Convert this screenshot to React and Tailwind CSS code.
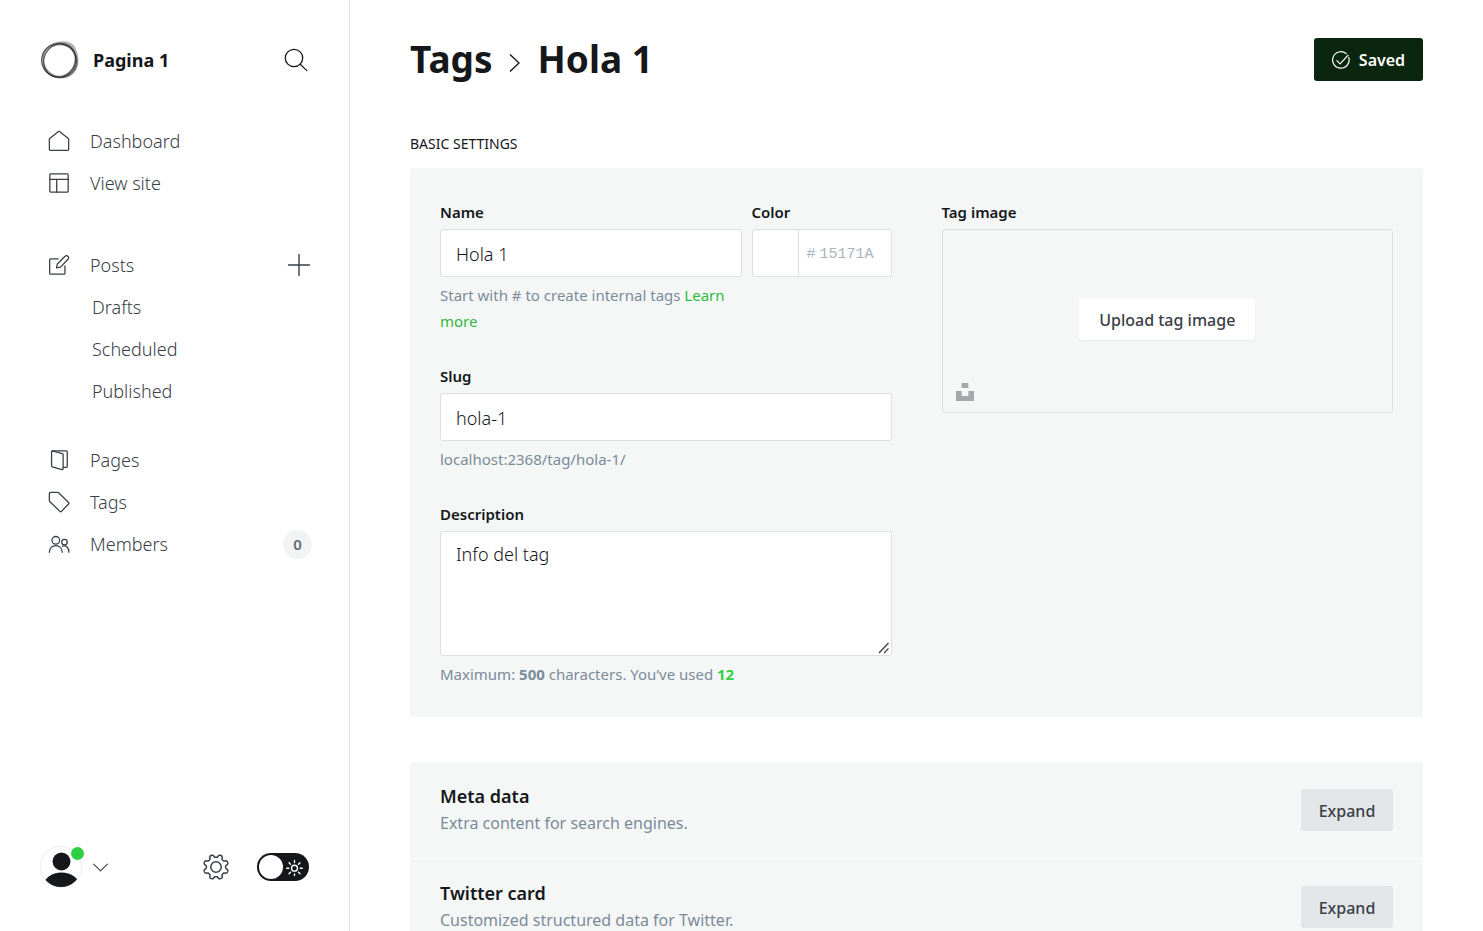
import React from 'react';

function Icon({ children, className = 'size-[22px]', width = 1.4 }) {
  return (
    <svg
      viewBox="0 0 24 24"
      className={className + ' shrink-0'}
      fill="none"
      stroke="currentColor"
      strokeWidth={width}
      strokeLinecap="round"
      strokeLinejoin="round"
      aria-hidden="true"
    >
      {children}
    </svg>
  );
}

const homeIcon = (
  <Icon>
    <path d="M1.500 9.500v11.900c0 .5.300.8.800.8h19.400c.5 0 .8-.3.8-.8V9.500L12.600 1.700a1 1 0 0 0-1.200 0z" />
  </Icon>
);
const siteIcon = (
  <Icon>
    <rect x="2" y="2" width="20" height="20" rx="1" />
    <path d="M2 8h20M9.500 8v14" />
  </Icon>
);
const postsIcon = (
  <Icon>
    <path d="M11 5.300H2.800c-.6 0-1 .4-1 1v14.700c0 .6.4 1 1 1h14.700c.6 0 1-.4 1-1V13" />
    <path d="m13.600 14.300-4.300.9.900-4.300 8.400-8.400a2.200 2.200 0 0 1 3.200 0 2.200 2.200 0 0 1 0 3.200z" />
  </Icon>
);
const pagesIcon = (
  <Icon>
    <path d="M4.500 2h15.500c.5 0 1 .4 1 1v16c0 .5-.4 1-1 1h-3.500" />
    <path d="m4.700 2.100 11 3c.5.100.8.500.8 1v15.500c0 .6-.5 1-1.200.8l-10.600-3a1 1 0 0 1-.8-1V3c0-.6.300-1 .8-.9z" />
  </Icon>
);
const tagIcon = (
  <Icon>
    <path d="M1.500 2.500c0-.6.400-1 1-1h8c.5 0 1 .200 1.400.600l10.500 10.400c.5.500.5 1.200 0 1.700l-7.700 8c-.5.500-1.200.5-1.700 0L2.100 11.700a2 2 0 0 1-.6-1.400z" />
  </Icon>
);
const membersIcon = (
  <Icon>
    <circle cx="8.500" cy="8" r="4.200" />
    <circle cx="18" cy="10" r="3" />
    <path d="M1.500 21c0-4.500 3-7.300 7-7.300s7 2.800 7 7.300M15.800 14.500c3.500-1.700 7 .9 7 6.500" />
  </Icon>
);

function NavItem({ icon, children }) {
  return (
    <a href="#" className="flex h-[42px] grow items-center gap-[20px] pl-2">
      {icon}
      <span>{children}</span>
    </a>
  );
}

function SubItem({ children }) {
  return (
    <a href="#" className="flex h-[42px] items-center pl-[52px]">
      {children}
    </a>
  );
}

function Logo() {
  return (
    <svg viewBox="0 0 40 40" className="size-10 shrink-0" fill="none" aria-hidden="true">
      <path
        d="M19.500 1.500C27 .500 34.500 3 36 9.500C39.500 16 39.500 24 36 30C31 38 23 39.500 16 38C6 35.500 .500 28 1.500 18C2.500 8.500 11 3 19.500 1.500ZM20 5.500C11.500 5.500 4.500 11.500 4 20C3.500 29 11 35.500 20 35.500C26 35.500 33 29.500 34 22C36 12 29 5.500 20 5.500Z"
        fill="#222"
        fillOpacity=".35"
        fillRule="evenodd"
      />
      <ellipse cx="19.500" cy="20" rx="17.200" ry="15.500" stroke="#111" strokeOpacity=".65" strokeWidth="1.100" transform="rotate(-58 20 20)" />
      <ellipse cx="19.200" cy="20.800" rx="17.500" ry="16.700" stroke="#111" strokeOpacity=".6" strokeWidth="1.200" transform="rotate(15 20 20)" />
      <ellipse cx="20.300" cy="20" rx="18" ry="16.200" stroke="#333" strokeOpacity=".4" strokeWidth="1" transform="rotate(48 20 20)" />
    </svg>
  );
}

const gearPath = (() => {
  const points = [];
  for (let i = 0; i < 240; i++) {
    const a = (i / 240) * Math.PI * 2;
    const wave = Math.tanh(2.200 * Math.cos(8 * (a - Math.PI / 8))) / Math.tanh(2.200);
    const r = 10.200 + 1.300 * wave;
    points.push((12 + r * Math.cos(a)).toFixed(2) + ' ' + (12 + r * Math.sin(a)).toFixed(2));
  }
  return 'M' + points.join('L') + 'Z';
})();

function Sidebar() {
  return (
    <aside className="flex w-[350px] shrink-0 flex-col border-r border-[#e1e3e5] pt-10 pr-[37px] pb-[43px] pl-10 text-[#394047]">
      <div className="flex h-10 items-center">
        <Logo />
        <span className="ml-[13px] flex-1 text-[18px] font-bold text-[#15171a]">Pagina 1</span>
        <button type="button" aria-label="Search" className="mr-1 text-[#15171a]">
          <Icon className="size-6" width={1.3}>
            <circle cx="10" cy="10" r="8.700" />
            <path d="m16.300 16.300 6.500 6.300" />
          </Icon>
        </button>
      </div>
      <nav className="mt-10 flex flex-col text-[18px] font-light">
        <NavItem icon={homeIcon}>Dashboard</NavItem>
        <NavItem icon={siteIcon}>View site</NavItem>
        <div className="mt-10 flex items-center">
          <NavItem icon={postsIcon}>Posts</NavItem>
          <button type="button" aria-label="New post" className="mr-px">
            <Icon className="size-6" width={1.4}>
              <path d="M12 1.500v21M1.500 12h21" />
            </Icon>
          </button>
        </div>
        <SubItem>Drafts</SubItem>
        <SubItem>Scheduled</SubItem>
        <SubItem>Published</SubItem>
        <div className="mt-[27px] flex flex-col">
          <NavItem icon={pagesIcon}>Pages</NavItem>
          <NavItem icon={tagIcon}>Tags</NavItem>
          <div className="flex items-center">
            <NavItem icon={membersIcon}>Members</NavItem>
            <span className="flex size-[29px] items-center justify-center rounded-full bg-[#f1f3f4] text-[15px] font-semibold text-[#626d79]">
              0
            </span>
          </div>
        </div>
      </nav>
      <div className="mt-auto flex h-[42px] items-center">
        <button type="button" aria-label="Account" className="flex items-center gap-[11px]">
          <span className="relative block size-[42px]">
            <svg viewBox="0 0 42 42" className="size-full" aria-hidden="true">
              <defs>
                <clipPath id="avatar">
                  <circle cx="21" cy="20.500" r="20.500" />
                </clipPath>
              </defs>
              <circle cx="21" cy="21" r="20.500" fill="#fff" stroke="#e9edf0" />
              <g clipPath="url(#avatar)" fill="#15171a">
                <circle cx="21.500" cy="15.500" r="9" />
                <ellipse cx="21.500" cy="40" rx="18" ry="13.500" />
              </g>
            </svg>
            <span className="absolute top-px -right-0.5 size-[13px] rounded-full bg-[#30cf43]" />
          </span>
          <Icon className="size-[15px]" width={1.7}>
            <path d="M1 6.500 12 17.500 23 6.500" />
          </Icon>
        </button>
        <button type="button" aria-label="Settings" className="mr-7 ml-auto">
          <Icon className="size-[26px]" width={1.4}>
            <path d={gearPath} />
            <circle cx="12" cy="12" r="4.800" />
          </Icon>
        </button>
        <button
          type="button"
          role="switch"
          aria-checked="false"
          aria-label="Dark mode"
          className="mr-[3px] flex h-7 w-[52px] items-center justify-between rounded-full bg-[#15171a] pr-1.5 pl-0.5 text-white"
        >
          <span className="size-6 rounded-full bg-white" />
          <Icon className="size-[17px]" width={1.9}>
            <circle cx="12" cy="13" r="4.200" />
            <path d="M12 2v3M12 21v3M1 13h3M20 13h3M4.200 5.200l2.200 2.200M17.600 18.600l2.200 2.200M4.200 20.800l2.200-2.200M17.600 7.400l2.200-2.200" />
          </Icon>
        </button>
      </div>
    </aside>
  );
}

const labelClass = 'mb-[5px] block text-[15px] leading-6 font-semibold text-[#15171a]';
const fieldClass =
  'block w-full rounded-[3px] border border-[#dddfe0] bg-white px-[15px] text-[18px] font-light text-[#15171a] outline-none';
const inputClass = fieldClass + ' h-12 pt-0.5';
const helpClass = 'mt-[5px] text-[15px] leading-[26px] text-[#7c8b9a]';

function SettingsRow({ title, text }) {
  return (
    <div className="flex items-center justify-between px-[30px] py-[27px]">
      <div className="-my-1.5">
        <h2 className="text-[18px] leading-[27px] font-semibold text-[#15171a]">{title}</h2>
        <p className="text-[16px] leading-[27px] text-[#7c8b9a]">{text}</p>
      </div>
      <button type="button" className="h-[42px] w-[92px] rounded-[3px] bg-[#e3e6e9] pt-0.5 text-[16px] font-medium text-[#394047]">
        Expand
      </button>
    </div>
  );
}

export default function App() {
  return (
    <div className="flex h-screen overflow-hidden bg-white font-['Noto_Sans','Open_Sans',sans-serif]">
      <Sidebar />
      <main className="min-w-0 flex-1 overflow-y-auto px-[60px] pt-[38px] [scrollbar-width:none]">
        <header className="flex h-[43px] items-center justify-between text-[#15171a]">
          <h1 className="flex items-center pb-0.5 text-[37px] leading-[43px] font-bold">
            <a href="#">Tags</a>
            <svg viewBox="0 0 12 20" className="mt-2 mr-[18px] ml-4 h-[18px] w-[11px]" fill="none" stroke="currentColor" strokeWidth="1.500" aria-hidden="true">
              <path d="m1 .500 10 9.500-10 9.500" />
            </svg>
            <span>Hola 1</span>
          </h1>
          <button type="button" className="flex h-[43px] w-[109px] items-center justify-center gap-[9px] rounded-[3px] bg-[#0a260e] text-[16px] font-semibold text-white">
            <Icon className="size-[18px]" width={1.6}>
              <path d="M22.300 8.500A11 11 0 1 1 18.800 3.400" />
              <path d="m6.500 12.800 4.300 4.300L21.500 5.500" />
            </Icon>
            Saved
          </button>
        </header>

        <h2 className="mt-[51px] mb-3 text-[14px] leading-6 text-[#15171a] uppercase">Basic settings</h2>
        <section className="grid grid-cols-2 gap-[50px] rounded-[3px] bg-[#f4f7f6] px-[30px] pt-8 pb-[30px]">
          <div className="flex flex-col gap-[30px]">
            <div className="flex gap-2.5">
              <div className="min-w-0 flex-1">
                <label htmlFor="name" className={labelClass}>Name</label>
                <input id="name" defaultValue="Hola 1" className={inputClass} />
                <p className={helpClass}>
                  Start with # to create internal tags{' '}
                  <a href="#" className="text-[#30b940]">Learn more</a>
                </p>
              </div>
              <div className="w-[140px]">
                <label htmlFor="color" className={labelClass}>Color</label>
                <div className="flex h-12 items-stretch overflow-hidden rounded-[3px] border border-[#dddfe0] bg-white font-['Liberation_Mono',monospace] text-[15px] text-[#abb4be]">
                  <span className="mr-2 w-[46px] shrink-0 border-r border-[#dddfe0]" />
                  <span className="flex items-center pt-1">#</span>
                  <input id="color" placeholder="15171A" className="ml-1 w-full min-w-0 pt-1 outline-none placeholder:text-[#abb4be]" />
                </div>
              </div>
            </div>
            <div>
              <label htmlFor="slug" className={labelClass}>Slug</label>
              <input id="slug" defaultValue="hola-1" className={inputClass} />
              <p className={helpClass}>localhost:2368/tag/hola-1/</p>
            </div>
            <div>
              <label htmlFor="description" className={labelClass}>Description</label>
              <div className="relative">
                <textarea
                  id="description"
                  defaultValue="Info del tag"
                  className={fieldClass + ' h-[125px] resize-y py-[9px] leading-[26px] [&::-webkit-resizer]:bg-white'}
                />
                <svg viewBox="0 0 12 12" className="pointer-events-none absolute right-0.5 bottom-0.5 size-3" stroke="#444" strokeWidth="1.400" aria-hidden="true">
                  <path d="M1 11 10.500 1M6 11l4.500-4.500" />
                </svg>
              </div>
              <p className={helpClass}>
                Maximum: <b>500</b> characters. You’ve used <b className="text-[#30cf43]">12</b>
              </p>
            </div>
          </div>
          <div>
            <span className={labelClass}>Tag image</span>
            <div className="relative flex h-[184px] items-center justify-center rounded-[3px] border border-[#dddfe0] pb-1">
              <button type="button" className="h-[42px] rounded-[3px] bg-white px-5 pt-0.5 text-[16px] font-medium text-[#394047] shadow-xs">
                Upload tag image
              </button>
              <button type="button" aria-label="Unsplash" className="absolute bottom-[11px] left-[13px]">
                <svg viewBox="0 0 32 32" className="size-[18px]" fill="#a5a8a8" aria-hidden="true">
                  <path d="M10 9V0h12v9zm12 5h10v18H0V14h10v9h12z" />
                </svg>
              </button>
            </div>
          </div>
        </section>

        <section className="mt-[45px] divide-y divide-white rounded-[3px] bg-[#f4f7f6]">
          <SettingsRow title="Meta data" text="Extra content for search engines." />
          <SettingsRow title="Twitter card" text="Customized structured data for Twitter." />
        </section>
      </main>
    </div>
  );
}
